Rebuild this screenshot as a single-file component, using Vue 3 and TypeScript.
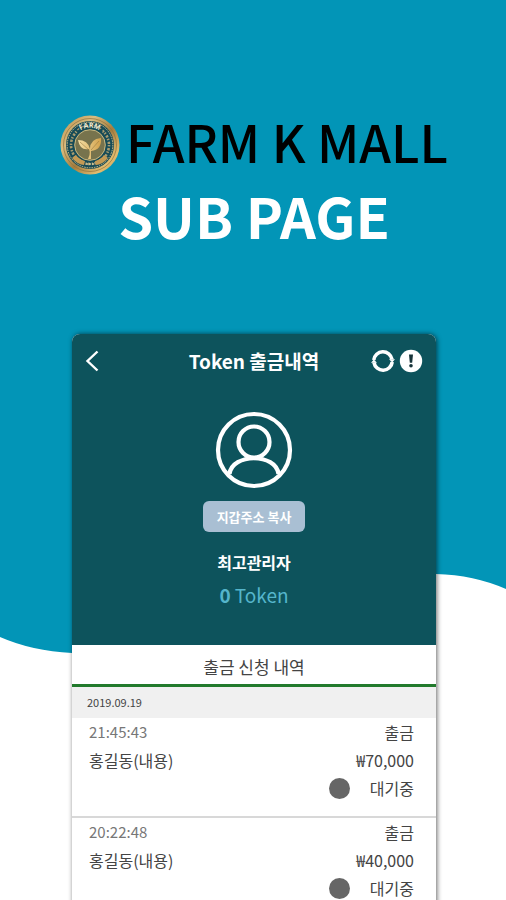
<script setup lang="ts">
interface Withdrawal {
  time: string
  kind: string
  name: string
  amount: string
  status: string
}

const date = '2019.09.19'
const withdrawals: Withdrawal[] = [
  { time: '21:45:43', kind: '출금', name: '홍길동(내용)', amount: '₩70,000', status: '대기중' },
  { time: '20:22:48', kind: '출금', name: '홍길동(내용)', amount: '₩40,000', status: '대기중' },
]
</script>

<template>
  <main class="poster">
    <svg class="wave" viewBox="0 0 506 900" preserveAspectRatio="none" aria-hidden="true">
      <path d="M0 0H506V589Q474 575 436 574C320 574 190 654 72 653Q32 651 0 637Z" fill="#0295b7" />
    </svg>

    <header class="brand">
      <h1 class="brand-name">
        <svg class="emblem" viewBox="0 0 60 60" aria-hidden="true">
          <defs>
            <linearGradient id="gold" x1="0" y1="0" x2="1" y2="1">
              <stop offset="0" stop-color="#b58b48" />
              <stop offset="0.3" stop-color="#d9bd80" />
              <stop offset="0.55" stop-color="#a47d3f" />
              <stop offset="0.8" stop-color="#e3bd70" />
              <stop offset="1" stop-color="#b48a45" />
            </linearGradient>
            <linearGradient id="leaf" x1="0" y1="0" x2="1" y2="0">
              <stop offset="0" stop-color="#f4dfa5" />
              <stop offset="1" stop-color="#d3a24c" />
            </linearGradient>
            <path id="arc" d="M13 26A17.5 17.5 0 0 1 47 26" />
          </defs>
          <circle cx="30" cy="30" r="29.5" fill="url(#gold)" />
          <circle cx="30" cy="30" r="26.5" fill="none" stroke="#8f713c" stroke-width="0.7" />
          <circle cx="30" cy="30" r="24" fill="#174b57" />
          <circle cx="30" cy="30" r="22.8" fill="none" stroke="#d5c08a" stroke-width="1" stroke-dasharray="1.5 1" />
          <circle cx="30" cy="30" r="19" fill="none" stroke="#a99c70" stroke-width="2.6" stroke-dasharray="1.4 1.7 2.3 1.2" />
          <path d="M17 16Q30 5 43 16L39 20Q30 13 21 20Z" fill="#174b57" />
          <path d="M12 43Q18 50 24 50L25 46Q19 44 16 40ZM48 43Q42 50 36 50L35 46Q41 44 44 40Z" fill="#c49a54" />
          <path d="M27 48v2M30 48v2M33 48v2" stroke="#e5d3a0" stroke-width="1.3" />
          <circle cx="30" cy="30" r="16.6" fill="#174b57" />
          <circle cx="30" cy="30" r="15.3" fill="#77734d" stroke="#c9b881" stroke-width="1" />
          <path d="M29.5 40Q30 36 29 34Q20 36 18 25Q28 25 30 34Q30 24 41 23Q42 35 31 36L31 44H28Z" fill="url(#leaf)" />
          <path d="M20 27L29 35M39 26L31 35" stroke="#9b7b3e" stroke-width="0.6" />
          <text class="emblem-text"><textPath href="#arc" startOffset="50%" text-anchor="middle">FARM</textPath></text>
        </svg>
        <span>FARM K MALL</span>
      </h1>
      <p class="brand-sub">SUB PAGE</p>
    </header>

    <section class="phone">
      <div class="hero">
        <nav class="bar">
          <button type="button" class="icon-button back" aria-label="뒤로">
            <svg width="14" height="22" viewBox="0 0 14 22">
              <path d="M12.5 1.5L2.5 11L12.5 20.5" fill="none" stroke="#fff" stroke-width="2.4" />
            </svg>
          </button>
          <h2 class="title">Token 출금내역</h2>
          <div class="actions">
            <button type="button" class="icon-button" aria-label="새로고침">
              <svg width="24" height="24" viewBox="0 0 24 24">
                <path d="M2.8 11A9.2 9.2 0 0 1 21 10.4M21.2 13A9.2 9.2 0 0 1 3 13.6" fill="none" stroke="#fff" stroke-width="3.6" />
                <path d="M18 10.2L24 10.2L21.2 13.6ZM6 13.8L0 13.8L2.8 10.4Z" fill="#fff" />
              </svg>
            </button>
            <button type="button" class="icon-button" aria-label="안내">
              <svg width="24" height="24" viewBox="0 0 24 24">
                <circle cx="12" cy="12" r="11.2" fill="#fff" />
                <path d="M10 5.5H14L13.2 13.8H10.8Z" fill="#17343a" />
                <circle cx="12" cy="16.7" r="1.8" fill="#17343a" />
              </svg>
            </button>
          </div>
        </nav>
        <div class="profile">
          <svg class="avatar" viewBox="0 0 78 78" aria-hidden="true">
            <g fill="none" stroke="#fff" stroke-width="4.2">
              <circle cx="39" cy="39" r="36" />
              <circle cx="39" cy="31" r="15.5" />
              <path d="M14.5 63C17 42 61 42 63.5 63" />
            </g>
          </svg>
          <button type="button" class="copy">지갑주소 복사</button>
          <p class="user">최고관리자</p>
          <p class="balance"><b>0</b> Token</p>
        </div>
      </div>

      <h3 class="tab">출금 신청 내역</h3>
      <p class="date">{{ date }}</p>
      <ul class="list">
        <li v-for="item in withdrawals" :key="item.time" class="item">
          <div class="line">
            <span class="time">{{ item.time }}</span>
            <span>{{ item.kind }}</span>
          </div>
          <div class="line">
            <span>{{ item.name }}</span>
            <span>{{ item.amount }}</span>
          </div>
          <div class="line status">
            <i class="dot"></i>
            <span>{{ item.status }}</span>
          </div>
        </li>
      </ul>
    </section>
  </main>
</template>

<style>
body {
  margin: 0;
}
</style>

<style scoped>
.poster {
  position: relative;
  box-sizing: border-box;
  height: 100vh;
  overflow: hidden;
  padding: 107px 70px 0 72px;
  background: #fff;
  font-family: "Noto Sans CJK KR", sans-serif;
}
.wave {
  position: absolute;
  inset: 0;
  width: 100%;
  height: 100%;
}
h1, h2, h3, p, ul {
  margin: 0;
  padding: 0;
}
.brand {
  position: relative;
  display: flex;
  flex-direction: column;
  align-items: center;
  height: 227px;
}
.brand-name {
  display: flex;
  align-items: flex-end;
  gap: 6px;
  height: 68px;
  color: #000;
  font-size: 51px;
  font-weight: 500;
  line-height: 68px;
  white-space: nowrap;
}
.emblem {
  flex: none;
  width: 60px;
  height: 60px;
}
.emblem-text {
  fill: #f3ead0;
  font: 700 7px "Noto Sans", sans-serif;
}
.brand-sub {
  margin-top: 8px;
  color: #fff;
  font-size: 56px;
  font-weight: 700;
  line-height: 64px;
}
.phone {
  position: relative;
  border-radius: 8px 8px 0 0;
  background: #fff;
  box-shadow: 1px 0 5px rgba(0, 0, 0, 0.6);
  color: #444;
  font-size: 16px;
}
.hero {
  height: 311px;
  border-radius: 8px 8px 0 0;
  background: #0d535c;
  color: #fff;
}
.bar {
  display: grid;
  grid-template-columns: 1fr auto 1fr;
  align-items: center;
  height: 53px;
  padding: 0 13px;
}
.icon-button {
  display: flex;
  padding: 0;
  border: 0;
  background: none;
}
.back {
  justify-self: start;
}
.title {
  font-size: 19px;
  font-weight: 700;
}
.actions {
  display: flex;
  justify-content: flex-end;
  gap: 4px;
}
.profile {
  display: flex;
  flex-direction: column;
  align-items: center;
  padding-top: 24px;
}
.avatar {
  width: 78px;
  height: 78px;
}
.copy {
  height: 31px;
  margin-top: 12px;
  padding: 0 14px;
  border: 0;
  border-radius: 6px;
  background: #a9bfd3;
  color: #fff;
  font: 700 13px/30px "Noto Sans CJK KR", sans-serif;
}
.user {
  margin-top: 18px;
  font-size: 16px;
  font-weight: 700;
  line-height: 24px;
}
.balance {
  margin-top: 8px;
  color: #55b5cb;
  font-size: 19px;
  line-height: 26px;
}
.tab {
  padding-top: 4px;
  border-bottom: 3px solid #227a2c;
  font-size: 17px;
  font-weight: 400;
  line-height: 35px;
  text-align: center;
}
.date {
  padding: 0 15px;
  background: #f0f0f0;
  font-size: 11px;
  line-height: 31px;
}
.list {
  list-style: none;
}
.item {
  height: 98px;
  padding: 0 22px 0 17px;
  border-bottom: 2px solid #d8d8d8;
  line-height: 20px;
}
.line {
  display: flex;
  justify-content: space-between;
  align-items: center;
  height: 28px;
}
.time {
  color: #777;
  font-size: 15px;
}
.status {
  justify-content: flex-end;
  gap: 20px;
}
.dot {
  width: 21px;
  height: 21px;
  border-radius: 50%;
  background: #666;
}
</style>
